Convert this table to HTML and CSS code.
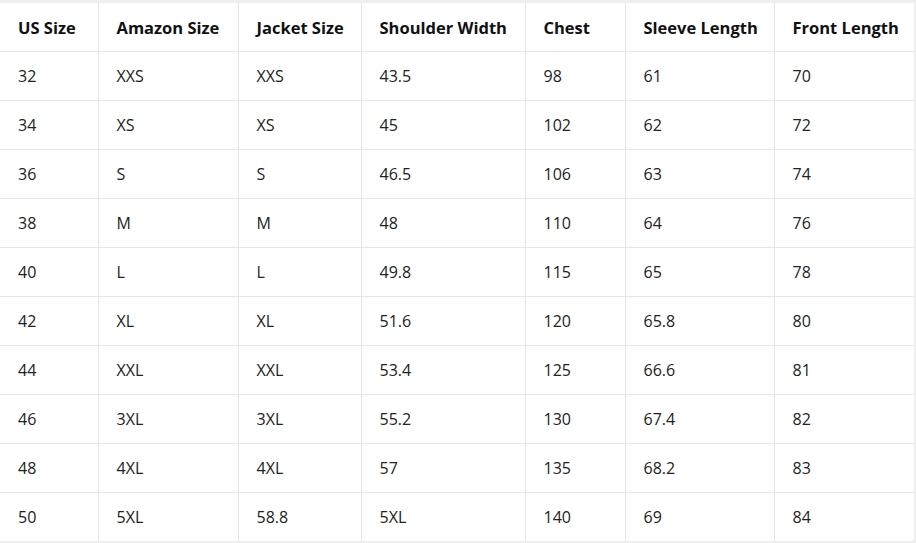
FILE: index.html
```html
<!DOCTYPE html>
<html>
<head>
<meta charset="utf-8">
<link rel="stylesheet" href="styles.css">
</head>
<body>
<div class="wrap">
<table class="size-table">
<colgroup>
<col class="c1"><col class="c2"><col class="c3"><col class="c4"><col class="c5"><col class="c6"><col class="c7">
</colgroup>
<thead>
<tr><th>US Size</th><th>Amazon Size</th><th>Jacket Size</th><th>Shoulder Width</th><th>Chest</th><th>Sleeve Length</th><th>Front Length</th></tr>
</thead>
<tbody>
<tr><td>32</td><td>XXS</td><td>XXS</td><td>43.5</td><td>98</td><td>61</td><td>70</td></tr>
<tr><td>34</td><td>XS</td><td>XS</td><td>45</td><td>102</td><td>62</td><td>72</td></tr>
<tr><td>36</td><td>S</td><td>S</td><td>46.5</td><td>106</td><td>63</td><td>74</td></tr>
<tr><td>38</td><td>M</td><td>M</td><td>48</td><td>110</td><td>64</td><td>76</td></tr>
<tr><td>40</td><td>L</td><td>L</td><td>49.8</td><td>115</td><td>65</td><td>78</td></tr>
<tr><td>42</td><td>XL</td><td>XL</td><td>51.6</td><td>120</td><td>65.8</td><td>80</td></tr>
<tr><td>44</td><td>XXL</td><td>XXL</td><td>53.4</td><td>125</td><td>66.6</td><td>81</td></tr>
<tr><td>46</td><td>3XL</td><td>3XL</td><td>55.2</td><td>130</td><td>67.4</td><td>82</td></tr>
<tr><td>48</td><td>4XL</td><td>4XL</td><td>57</td><td>135</td><td>68.2</td><td>83</td></tr>
<tr><td>50</td><td>5XL</td><td>58.8</td><td>5XL</td><td>140</td><td>69</td><td>84</td></tr>
</tbody>
</table>
</div>
</body>
</html>
```
FILE: styles.css
```css
html, body {
  margin: 0;
  padding: 0;
  background: #efefef;
}
body {
  font-family: "Open Sans", "Noto Sans", sans-serif;
  color: #1b1b1b;
  width: 916px;
  height: 543px;
  overflow: hidden;
}
.wrap {
  padding-top: 3px;
  width: 914px;
}
.size-table {
  width: 914px;
  border-collapse: collapse;
  table-layout: fixed;
  background: #fff;
  border-bottom-right-radius: 4px;
}
.c1 { width: 98px; }
.c2 { width: 140px; }
.c3 { width: 123px; }
.c4 { width: 164px; }
.c5 { width: 100px; }
.c6 { width: 149px; }
.c7 { width: 140px; }
th, td {
  text-align: left;
  padding: 0 0 0 18px;
  font-size: 16px;
  white-space: nowrap;
  border-left: 1px solid #e6e6e6;
  border-bottom: 1px solid #e6e6e6;
}
th:first-child, td:first-child { border-left: none; }
th {
  height: 48px;
  font-size: 16.5px;
  font-weight: 700;
  color: #111;
}
td {
  height: 48px;
  font-weight: 400;
  color: #222;
}
tbody tr:last-child td { border-bottom: none; height: 48px; }
```
